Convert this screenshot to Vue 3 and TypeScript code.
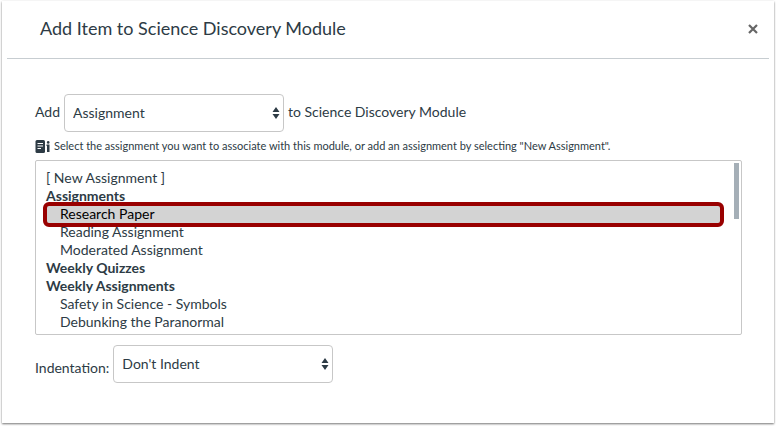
<script setup lang="ts">
import { ref } from 'vue'

interface Group {
  label: string
  items: string[]
}

const itemType = ref<string>('Assignment')
const indent = ref<string>("Don't Indent")
const selected = ref<string>('Research Paper')

const groups: Group[] = [
  { label: 'Assignments', items: ['Research Paper', 'Reading Assignment', 'Moderated Assignment'] },
  { label: 'Weekly Quizzes', items: [] },
  { label: 'Weekly Assignments', items: ['Safety in Science - Symbols', 'Debunking the Paranormal'] },
]
</script>

<template>
  <section class="dialog" role="dialog" aria-labelledby="dialog-title">
    <header class="head">
      <h1 id="dialog-title">Add Item to Science Discovery Module</h1>
      <button class="close" type="button">
        <svg viewBox="0 0 10 10" width="10" height="10" aria-hidden="true">
          <path d="M1 1L9 9M9 1L1 9" fill="none" stroke="#666" stroke-width="2.2" />
        </svg>
      </button>
    </header>
    <form class="body" @submit.prevent>
      <div class="row">
        <label class="text" for="item-type">Add</label>
        <span class="picker">
          <select id="item-type" v-model="itemType">
            <option>Assignment</option>
          </select>
          <svg class="arrows" viewBox="0 0 8 14" width="8" height="14" aria-hidden="true">
            <path d="M0.5 6L4 1L7.5 6ZM0.5 8H7.5L4 13Z" fill="#2d3b45" />
          </svg>
        </span>
        <span class="text">to Science Discovery Module</span>
      </div>
      <label class="hint" for="assignments">
        <svg viewBox="0 0 15 13" width="15" height="13" aria-hidden="true">
          <rect x="0.5" y="0" width="9.5" height="13" rx="1.5" fill="#2d3b45" />
          <path d="M2.5 3.5H8M2.5 6H8M2.5 8.5H6" stroke="#fff" stroke-width="1" />
          <path d="M11.5 4.5H14.5V12H12V6H11.5Z" fill="#2d3b45" />
          <circle cx="13.2" cy="2.4" r="1.3" fill="#2d3b45" />
        </svg>
        <span>Select the assignment you want to associate with this module, or add an assignment by selecting "New Assignment".</span>
      </label>
      <div class="listbox">
        <select id="assignments" v-model="selected" size="9">
          <option>[ New Assignment ]</option>
          <optgroup v-for="group in groups" :key="group.label" :label="group.label">
            <option v-for="item in group.items" :key="item">{{ item }}</option>
          </optgroup>
        </select>
        <span class="ring"></span>
        <span class="thumb"></span>
      </div>
      <div class="row indent">
        <label for="indent">Indentation:</label>
        <span class="picker">
          <select id="indent" v-model="indent">
            <option>Don't Indent</option>
          </select>
          <svg class="arrows" viewBox="0 0 8 14" width="8" height="14" aria-hidden="true">
            <path d="M0.5 6L4 1L7.5 6ZM0.5 8H7.5L4 13Z" fill="#2d3b45" />
          </svg>
        </span>
      </div>
    </form>
  </section>
</template>

<style>
body {
  background: #fff;
}
</style>

<style scoped>
* {
  box-sizing: border-box;
}
.dialog {
  display: flow-root;
  margin: 1px 2px 3px;
  min-height: calc(100vh - 4px);
  padding: 0 5px;
  background: #fff;
  box-shadow: 0 1px 2px rgba(0, 0, 0, 0.55);
  color: #2d3b45;
  font: 14px/18px Lato, sans-serif;
}
.head {
  display: flex;
  align-items: center;
  justify-content: space-between;
  height: 58px;
  padding: 0 10px 2px 33px;
  border-bottom: 1px solid #c7cdd1;
}
h1 {
  margin: 0;
  padding-bottom: 2px;
  font-size: 18px;
  line-height: 24px;
  font-weight: 400;
}
.close {
  display: flex;
  padding: 1px;
  border: 0;
  background: none;
}
.body {
  padding: 35px 27px 0 28px;
}
.row {
  display: flex;
  align-items: center;
  gap: 4px;
}
.text {
  padding-bottom: 2px;
}
.picker {
  position: relative;
  display: flex;
  width: 220px;
}
.picker select {
  appearance: none;
  width: 100%;
  height: 38px;
  padding: 0 8px;
  border: 1px solid #c7c7c7;
  border-radius: 4px;
  background: #fff;
  color: inherit;
  font: inherit;
}
.arrows {
  position: absolute;
  right: 4px;
  top: 12px;
  pointer-events: none;
}
.hint {
  display: flex;
  align-items: center;
  gap: 4px;
  height: 28px;
  font-size: 11px;
}
.listbox {
  position: relative;
}
.listbox select {
  display: block;
  width: 100%;
  height: 175px;
  padding: 8px 20px 3px 8px;
  border: 1px solid #c7c7c7;
  border-radius: 2px;
  outline: 0;
  background: #fff;
  color: inherit;
  font: inherit;
  overflow: hidden;
}
.listbox optgroup {
  line-height: 17px;
  font-weight: 700;
}
.listbox option {
  height: 18px;
  min-height: 18px;
  padding: 0 2px;
  line-height: 18px;
  font-weight: 400;
}
.listbox optgroup option {
  padding-left: 16px;
}
.listbox optgroup option::before {
  content: none;
}
.listbox option:checked {
  background: #d3d3d3 linear-gradient(#d3d3d3, #d3d3d3);
  color: #000;
}
.ring {
  position: absolute;
  top: 42px;
  left: 8px;
  right: 18px;
  height: 25px;
  border: 4px solid #990000;
  border-radius: 6px;
  pointer-events: none;
}
.thumb {
  position: absolute;
  top: 3px;
  right: 3px;
  width: 5px;
  height: 56px;
  background: #a5afb7;
}
.indent {
  align-items: flex-end;
  margin-top: 10px;
}
.indent label {
  padding-bottom: 6px;
}
</style>
